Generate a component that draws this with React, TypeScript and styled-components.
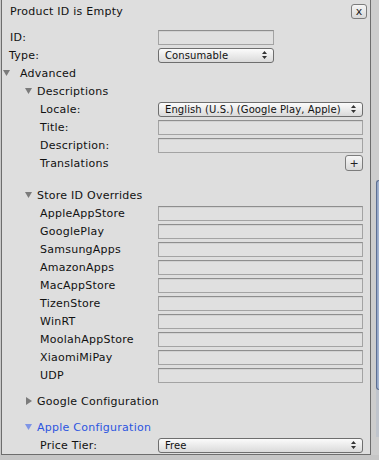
import React from 'react'
import styled, { createGlobalStyle } from 'styled-components'

const Global = createGlobalStyle`
  html, body {
    margin: 0;
    padding: 0;
    background: #c9c9c9;
  }
  body {
    font-family: 'DejaVu Sans', 'Liberation Sans', sans-serif;
    font-size: 11px;
    letter-spacing: 0.25px;
    color: #111;
  }
`

const Page = styled.div`
  width: 379px;
  height: 460px;
  display: grid;
  grid-template-columns: 371px 8px;
  grid-template-rows: 455px 5px;
  overflow: hidden;
`

const Panel = styled.section`
  background: #dedede;
  border-left: 1px solid #6d6d6d;
  border-right: 1px solid #6d6d6d;
  border-bottom: 1px solid #6d6d6d;
  margin-left: 1px;
  padding: 3px 7px 0 1px;
  overflow: hidden;
`

const Gutter = styled.div`
  background: #cdcdcd;
  display: flex;
  flex-direction: column;
  padding-top: 180px;
  padding-left: 5px;
`

const Thumb = styled.div`
  height: 208px;
  background: linear-gradient(90deg, #8fa2c4, #a9b8d3);
  border: 1px solid #5d6f92;
  border-right: none;
  border-radius: 4px 0 0 4px;
`

const Track = styled.div`
  height: 47px;
  background: #bfc4cc;
`

const Bottom = styled.div`
  grid-column: 1 / 3;
  background: #c6c6c6;
`

const Header = styled.div`
  display: flex;
  align-items: center;
  justify-content: space-between;
  height: 16px;
  padding-left: 7px;
  margin-right: -4px;
  margin-bottom: 9px;
`

const SmallButton = styled.button<{ $w: number; $h: number }>`
  width: ${({ $w }) => $w}px;
  height: ${({ $h }) => $h}px;
  padding: 0;
  border: 1px solid #7c7c7c;
  border-radius: 3px;
  background: linear-gradient(#f6f6f6, #d8d8d8);
  font-family: 'DejaVu Sans', sans-serif;
  font-size: 11px;
  line-height: 1;
  color: #222;
  display: flex;
  align-items: center;
  justify-content: center;
`

const Row = styled.div<{ $indent: number }>`
  display: flex;
  align-items: center;
  height: 18px;
  padding-left: ${({ $indent }) => $indent}px;
`

const Label = styled.span`
  width: calc(155px - var(--ind));
  flex: none;
  white-space: nowrap;
`

const Field = styled.div<{ $w?: number }>`
  box-sizing: border-box;
  width: ${({ $w }) => ($w ? `${$w}px` : '205px')};
  height: 15px;
  background: #e0e0e0;
  border: 1px solid #a3a3a3;
  border-top-color: #8e8e8e;
  box-shadow: inset 0 1px 0 #d2d2d2;
`

const Popup = styled.div<{ $w?: number }>`
  box-sizing: border-box;
  width: ${({ $w }) => ($w ? `${$w}px` : '205px')};
  height: 15px;
  border: 1px solid #6e6e6e;
  border-radius: 3px;
  background: linear-gradient(#fbfbfb, #dadada);
  display: flex;
  align-items: center;
  justify-content: space-between;
  padding: 0 6px 0 6px;
  font-size: 10px;
  letter-spacing: 0.1px;
  white-space: nowrap;
`

const Foldout = styled.div<{ $indent: number; $gap: number; $active?: boolean }>`
  display: flex;
  align-items: center;
  height: 18px;
  padding-left: ${({ $indent }) => $indent}px;
  gap: ${({ $gap }) => $gap}px;
  color: ${({ $active }) => ($active ? '#2c55e0' : '#111')};
`

const Spacer = styled.div<{ $h: number }>`
  height: ${({ $h }) => $h}px;
`

const Arrows = () => (
  <svg width="5" height="8" viewBox="0 0 5 8">
    <path d="M0 3 L2.5 0 L5 3 Z M0 5 L2.5 8 L5 5 Z" fill="#333" />
  </svg>
)

const Tri = ({ open, color }: { open: boolean; color: string }) => (
  <svg width="7" height="8" viewBox="0 0 7 8">
    {open ? (
      <path d="M0 1 L7 1 L3.5 7 Z" fill={color} />
    ) : (
      <path d="M1 0 L7 4 L1 8 Z" fill={color} />
    )}
  </svg>
)

type LineProps = { label: string; indent: number; children: React.ReactNode }

const Line = ({ label, indent, children }: LineProps) => (
  <Row $indent={indent} style={{ ['--ind' as string]: `${indent}px` } as React.CSSProperties}>
    <Label>{label}</Label>
    {children}
  </Row>
)

const stores = [
  'AppleAppStore',
  'GooglePlay',
  'SamsungApps',
  'AmazonApps',
  'MacAppStore',
  'TizenStore',
  'WinRT',
  'MoolahAppStore',
  'XiaomiMiPay',
  'UDP'
]

const App: React.FC = () => {
  return (
    <Page>
      <Global />
      <Panel>
        <Header>
          <span>Product ID is Empty</span>
          <SmallButton $w={16} $h={15}>x</SmallButton>
        </Header>
        <Line label="ID:" indent={7}>
          <Field $w={116} />
        </Line>
        <Line label="Type:" indent={6}>
          <Popup $w={116}>
            <span>Consumable</span>
            <Arrows />
          </Popup>
        </Line>
        <Foldout $indent={0} $gap={10}>
          <Tri open color="#7b7b7b" />
          <span>Advanced</span>
        </Foldout>
        <Foldout $indent={22} $gap={5}>
          <Tri open color="#7b7b7b" />
          <span>Descriptions</span>
        </Foldout>
        <Line label="Locale:" indent={37}>
          <Popup>
            <span>English (U.S.) (Google Play, Apple)</span>
            <Arrows />
          </Popup>
        </Line>
        <Line label="Title:" indent={37}>
          <Field />
        </Line>
        <Line label="Description:" indent={37}>
          <Field />
        </Line>
        <Line label="Translations" indent={37}>
          <span style={{ flex: 1 }} />
          <SmallButton $w={18} $h={16}>+</SmallButton>
        </Line>
        <Spacer $h={14} />
        <Foldout $indent={22} $gap={5}>
          <Tri open color="#7b7b7b" />
          <span>Store ID Overrides</span>
        </Foldout>
        {stores.map(s => (
          <Line key={s} label={s} indent={37}>
            <Field />
          </Line>
        ))}
        <Spacer $h={8} />
        <Foldout $indent={22} $gap={5}>
          <Tri open={false} color="#7b7b7b" />
          <span>Google Configuration</span>
        </Foldout>
        <Spacer $h={8} />
        <Foldout $indent={22} $gap={5} $active>
          <Tri open color="#7f95e6" />
          <span>Apple Configuration</span>
        </Foldout>
        <Line label="Price Tier:" indent={37}>
          <Popup>
            <span>Free</span>
            <Arrows />
          </Popup>
        </Line>
      </Panel>
      <Gutter>
        <Thumb />
        <Track />
      </Gutter>
      <Bottom />
    </Page>
  )
}

export default App
